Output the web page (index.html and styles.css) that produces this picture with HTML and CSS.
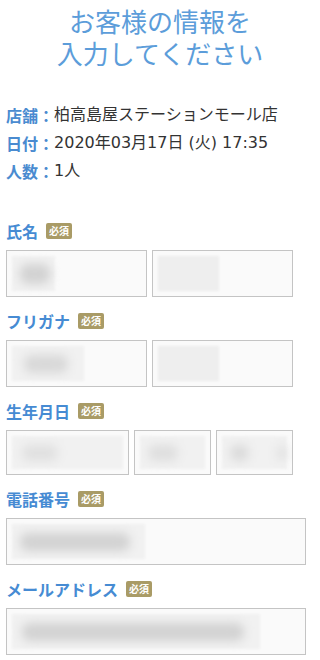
FILE: index.html
```html
<!DOCTYPE html>
<html lang="ja">
<head>
<meta charset="utf-8">
<link rel="stylesheet" href="styles.css">
</head>
<body>
<h1 class="title">お客様の情報を
入力してください</h1>

<dl class="info">
  <div class="info-line"><dt>店舗：</dt><dd>柏高島屋ステーションモール店</dd></div>
  <div class="info-line"><dt>日付：</dt><dd>2020年03月17日 (火) 17:35</dd></div>
  <div class="info-line"><dt>人数：</dt><dd>1人</dd></div>
</dl>

<form class="form">
  <section class="field field-name">
    <div class="label-row"><span class="label">氏名</span><span class="badge">必須</span></div>
    <div class="inputs cols-2">
      <div class="box h47"><span class="ph ph-name1"><span class="blob blob-name1"></span></span></div>
      <div class="box h47"><span class="ph ph-name2 ph-dark"></span></div>
    </div>
  </section>

  <section class="field">
    <div class="label-row"><span class="label">フリガナ</span><span class="badge">必須</span></div>
    <div class="inputs cols-2">
      <div class="box h47"><span class="ph ph-kana1"><span class="blob blob-kana1"></span></span></div>
      <div class="box h47"><span class="ph ph-name2"></span></div>
    </div>
  </section>

  <section class="field">
    <div class="label-row"><span class="label">生年月日</span><span class="badge">必須</span></div>
    <div class="inputs cols-3">
      <div class="box h45"><span class="ph ph-fill"><span class="blob blob-y"></span></span></div>
      <div class="box h45"><span class="ph ph-fill"><span class="blob blob-m"></span></span></div>
      <div class="box h45"><span class="ph ph-fill ph-pair"><span class="blob blob-d"></span><span class="blob blob-d2"></span></span></div>
    </div>
  </section>

  <section class="field">
    <div class="label-row"><span class="label">電話番号</span><span class="badge">必須</span></div>
    <div class="inputs">
      <div class="box h47"><span class="ph ph-tel"><span class="blob blob-tel"></span></span></div>
    </div>
  </section>

  <section class="field">
    <div class="label-row"><span class="label">メールアドレス</span><span class="badge">必須</span></div>
    <div class="inputs">
      <div class="box h47"><span class="ph ph-mail"><span class="blob blob-mail"></span></span></div>
    </div>
  </section>
</form>
</body>
</html>
```

FILE: styles.css
```css
* { box-sizing: border-box; }

body {
  margin: 0;
  background: #ffffff;
  color: #333333;
  font-family: "DejaVu Sans", "Noto Sans CJK JP", sans-serif;
}

.title {
  margin: 5px 0 0;
  font-family: "Noto Sans CJK JP", sans-serif;
  font-size: 26px;
  line-height: 32px;
  font-weight: 400;
  color: #5c9dda;
  text-align: center;
  white-space: pre-line;
}

.info {
  margin: 32px 0 0;
  padding: 0 6px;
}

.info-line {
  display: flex;
  font-size: 16px;
  line-height: 28px;
  height: 28px;
}

.info-line dt {
  font-family: "Noto Sans CJK JP", sans-serif;
  font-weight: 700;
  color: #4a8bd0;
}

.info-line dd {
  margin: 0;
  color: #333333;
}

.form {
  margin-top: 35px;
  padding: 0 6px;
  width: 312px;
  font-family: "Noto Sans CJK JP", sans-serif;
}

.field {
  margin-bottom: 13px;
}

.label-row {
  display: flex;
  align-items: center;
  height: 22px;
}

.label {
  font-size: 16px;
  font-weight: 700;
  color: #468bd3;
  line-height: 22px;
}

.badge {
  margin-left: 8px;
  width: 26px;
  height: 16px;
  border-radius: 2px;
  background: #a99b66;
  color: #ffffff;
  font-size: 10px;
  font-weight: 700;
  line-height: 16px;
  text-align: center;
}

.inputs {
  margin-top: 8px;
  display: grid;
  grid-template-columns: 300px;
  gap: 5px;
}

.cols-2 { grid-template-columns: 141px 141px; }
.cols-3 { grid-template-columns: 123px 77px 77px; }

.box {
  border: 1px solid #c4c4c4;
  background: #fafafa;
  padding: 5px 5px;
  display: flex;
  overflow: hidden;
}

.h47 { height: 47px; }
.h45 { height: 45px; }

.ph {
  display: flex;
  align-items: center;
  background: #f1f1f1;
  filter: blur(1px);
  height: 100%;
}

.ph-dark { background: linear-gradient(90deg, #e8e8e8, #ececec 60%, #f0f0f0); }

.ph-name1 { width: 43px; }
.ph-name2 { width: 61px; background: #eeeeee; }
.ph-kana1 { width: 72px; }
.ph-fill { width: 100%; }
.ph-tel { width: 133px; }
.ph-mail { width: 248px; }

.blob {
  display: block;
  height: 16px;
  border-radius: 8px;
  background: #d8d8d8;
  filter: blur(5px);
}

.blob-name1 { width: 30px; margin-left: 8px; height: 20px; background: #d2d2d2; }
.blob-kana1 { width: 44px; margin-left: 12px; height: 18px; background: #d8d8d8; }
.blob-y { width: 36px; margin-left: 10px; background: #e0e0e0; }
.blob-m { width: 30px; margin-left: 8px; background: #dedede; }
.blob-d { width: 24px; margin-left: 8px; background: #dadada; }
.blob-d2 { width: 12px; margin-left: 28px; background: #e2e2e2; }
.blob-tel { width: 110px; margin-left: 8px; height: 18px; background: #d2d2d2; }
.blob-mail { width: 222px; margin-left: 10px; height: 18px; background: #d2d2d2; }
```
